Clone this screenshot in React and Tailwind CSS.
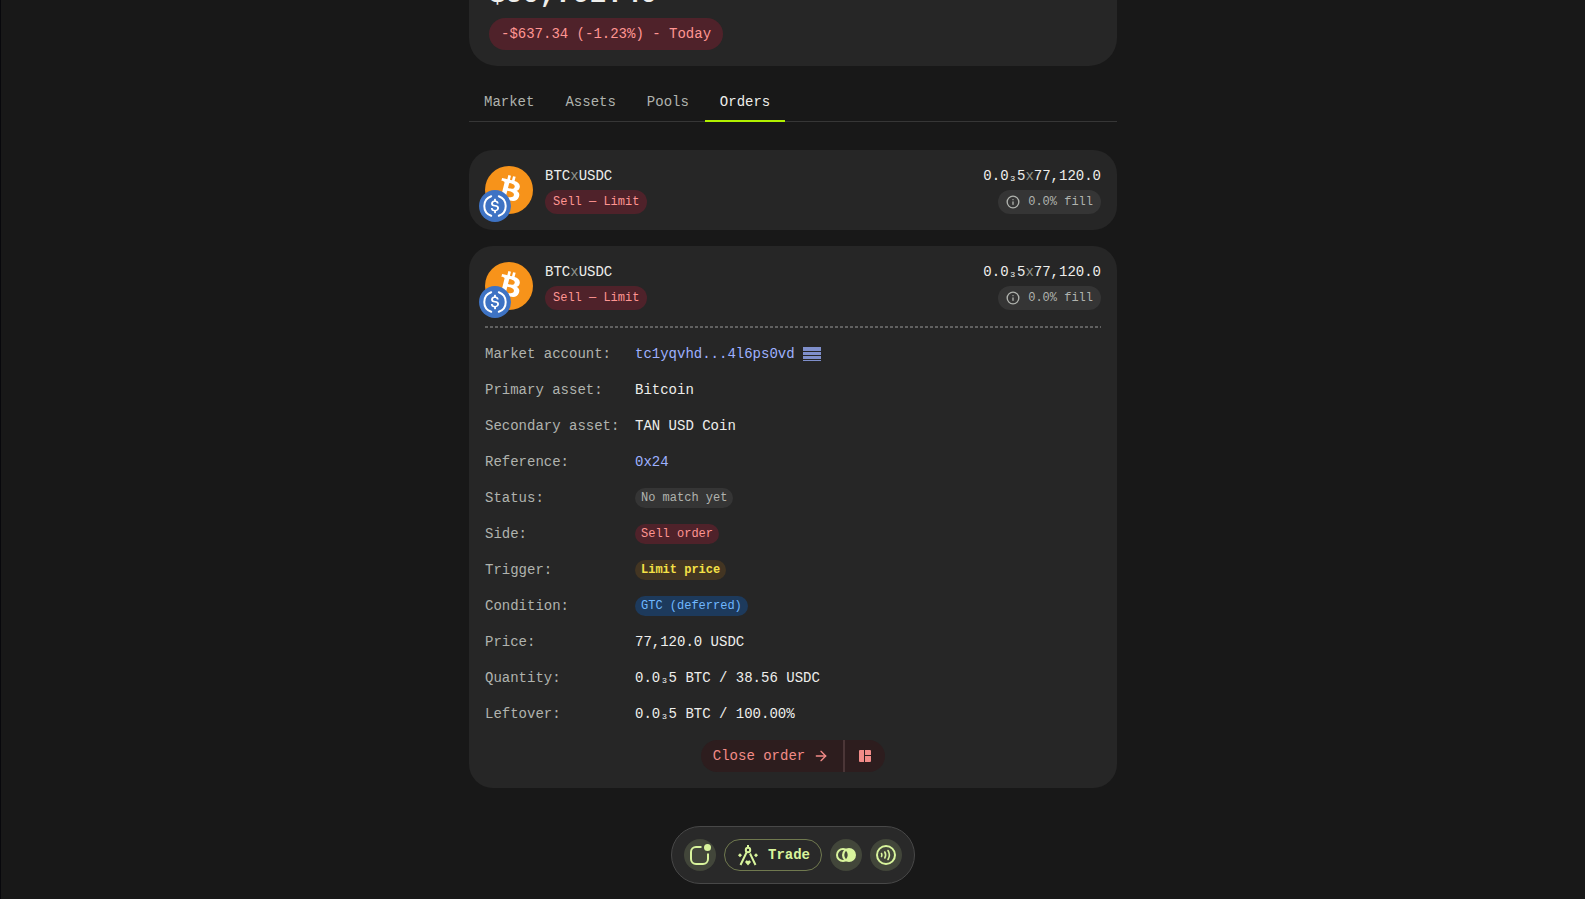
import { Info, ArrowRight } from "lucide-react";

const tabs = ["Market", "Assets", "Pools", "Orders"];

const tones = {
  gray: "bg-[#353535] text-[#b0b3ae]",
  red: "bg-[#4f222a] text-[#ff9592]",
  yellow: "bg-[#433522] text-[#f5e147] font-bold",
  blue: "bg-[#1d3a5c] text-[#70b8ff]",
};

const details = [
  { label: "Market account:", value: "tc1yqvhd...4l6ps0vd", href: "#account", lines: true },
  { label: "Primary asset:", value: "Bitcoin" },
  { label: "Secondary asset:", value: "TAN USD Coin" },
  { label: "Reference:", value: "0x24", href: "#reference" },
  { label: "Status:", value: "No match yet", tone: "gray" },
  { label: "Side:", value: "Sell order", tone: "red" },
  { label: "Trigger:", value: "Limit price", tone: "yellow" },
  { label: "Condition:", value: "GTC (deferred)", tone: "blue" },
  { label: "Price:", value: "77,120.0 USDC" },
  { label: "Quantity:", value: "0.0₃5 BTC / 38.56 USDC" },
  { label: "Leftover:", value: "0.0₃5 BTC / 100.00%" },
];

function BtcIcon() {
  return (
    <svg viewBox="0 0 32 32" className="size-12">
      <circle cx="16" cy="16" r="16" fill="#f7931a" />
      <path
        fill="#fff"
        d="M23.19 14.02c.31-2.1-1.29-3.23-3.47-3.98l.71-2.84-1.73-.43-.69 2.76c-.45-.11-.92-.22-1.39-.32l.7-2.78-1.73-.43-.71 2.83c-.37-.08-.74-.17-1.1-.26v-.01l-2.38-.6-.46 1.85s1.28.29 1.26.31c.7.17.82.64.8 1l-.8 3.24c.05.01.11.03.18.06l-.18-.05-1.13 4.53c-.09.21-.3.53-.79.41.02.02-1.26-.32-1.26-.32l-.86 1.99 2.25.56c.42.1.83.21 1.23.31l-.71 2.87 1.73.43.71-2.84c.47.13.93.25 1.38.36l-.71 2.82 1.73.43.72-2.86c2.95.56 5.17.33 6.1-2.34.75-2.15-.04-3.39-1.59-4.19 1.13-.26 1.98-1.01 2.2-2.55v.04zm-3.95 5.54c-.53 2.15-4.15.99-5.32.7l.95-3.81c1.17.29 4.93.87 4.37 3.11zm.54-5.57c-.49 1.95-3.5.96-4.47.72l.86-3.46c.97.24 4.11.7 3.61 2.74z"
      />
    </svg>
  );
}

function UsdcIcon() {
  return (
    <svg viewBox="0 0 32 32" className="absolute top-6 -left-1.5 size-8">
      <circle cx="16" cy="16" r="16" fill="#3e73c4" />
      <path
        fill="#fff"
        d="M20.02 18.12c0-2.12-1.28-2.85-3.83-3.15-1.82-.24-2.18-.73-2.18-1.58s.6-1.39 1.82-1.39c1.09 0 1.7.36 2 1.27.06.18.24.3.43.3h.97c.24 0 .42-.18.42-.42v-.06a3.04 3.04 0 0 0-2.73-2.49V9.14c0-.24-.18-.42-.49-.48h-.91c-.24 0-.42.18-.48.48v1.4c-1.82.24-2.98 1.45-2.98 2.97 0 2 1.22 2.79 3.77 3.09 1.7.3 2.25.67 2.25 1.64s-.85 1.64-2.01 1.64c-1.58 0-2.12-.67-2.31-1.58-.06-.24-.24-.36-.42-.36h-1.03c-.25 0-.43.18-.43.42v.06c.24 1.52 1.22 2.61 3.22 2.91v1.46c0 .24.18.43.49.49h.91c.24 0 .42-.19.48-.49v-1.46c1.82-.3 3.04-1.57 3.04-3.21z"
      />
      <path
        fill="none"
        stroke="#fff"
        strokeWidth="2"
        strokeLinecap="round"
        d="M12.2 6.2a10.4 10.4 0 0 0 0 19.6M19.8 6.2a10.4 10.4 0 0 1 0 19.6"
      />
    </svg>
  );
}

function OrderSummary() {
  return (
    <div className="flex justify-between">
      <div className="flex gap-3">
        <div className="relative">
          <BtcIcon />
          <UsdcIcon />
        </div>
        <div className="flex flex-col items-start gap-1">
          <span className="leading-5 text-[#eeeeec]">
            BTC<span className="text-[#8f948c]">x</span>USDC
          </span>
          <span className={`rounded-full px-2 text-xs leading-6 ${tones.red}`}>Sell — Limit</span>
        </div>
      </div>
      <div className="flex flex-col items-end gap-1">
        <span className="leading-5 text-[#eeeeec]">
          0.0₃5<span className="text-[#8f948c]">x</span>77,120.0
        </span>
        <span className={`flex items-center gap-2 rounded-full px-2 text-xs leading-6 ${tones.gray}`}>
          <Info size={14} strokeWidth={2.3} />
          0.0% fill
        </span>
      </div>
    </div>
  );
}

function DetailRow({ item }) {
  const badge = item.tone && `rounded-full px-1.5 text-xs leading-5 ${tones[item.tone]}`;

  return (
    <div className="flex h-5 items-center">
      <dt className="w-[150px] text-[#b0b3ae]">{item.label}</dt>
      <dd className="flex items-center gap-2 text-[#eeeeec]">
        {item.href ? (
          <a href={item.href} className="text-[#9eb1ff]">
            {item.value}
          </a>
        ) : (
          <span className={badge}>{item.value}</span>
        )}
        {item.lines && (
          <svg viewBox="0 0 18 14" className="h-3.5 w-[18px]" fill="#7f8fcb">
            <path d="M0 0h18v4H0zM0 5h18v3H0zM0 9h18v3H0zM0 13h18v1H0z" />
          </svg>
        )}
      </dd>
    </div>
  );
}

function RoundButton({ label, children }) {
  return (
    <button aria-label={label} className="flex size-8 items-center justify-center rounded-full bg-[#42463a]">
      {children}
    </button>
  );
}

function BottomNav() {
  return (
    <nav className="fixed inset-x-0 bottom-[15px] ml-px flex justify-center">
      <div className="flex items-center gap-2 rounded-full border border-[#484848] bg-[#292929] p-3 text-[#d8f49c]">
        <RoundButton label="Home">
          <svg viewBox="0 0 24 24" className="size-6" fill="none" stroke="currentColor" strokeWidth="2">
            <path d="M13.5 4H8a5 5 0 0 0-5 5v7a5 5 0 0 0 5 5h7a5 5 0 0 0 5-5v-5.5" />
            <circle cx="19.5" cy="4.5" r="3.5" fill="currentColor" stroke="none" />
          </svg>
        </RoundButton>
        <button className="flex h-8 items-center gap-2 rounded-full border border-[#70794f] px-[11px] font-bold">
          <svg viewBox="0 0 24 24" className="size-6" fill="none" stroke="currentColor" strokeWidth="2">
            <circle cx="12" cy="7" r="2.2" />
            <path d="M12 2v3M10.5 9.500 4.500 22M14 10.500 19.500 22" />
            <path d="m4 10.300 2 2-2 2-2-2zM20 10.300l2 2-2 2-2-2z" fill="currentColor" stroke="none" />
            <path d="M9 19 10.500 17.200l1.500.8 1.500-.8L15 19l-3 3.500z" fill="currentColor" stroke="none" />
          </svg>
          Trade
        </button>
        <RoundButton label="Swap">
          <svg viewBox="0 0 24 24" className="size-6" fill="none" stroke="currentColor" strokeWidth="2">
            <circle cx="15" cy="12" r="7" fill="currentColor" stroke="none" />
            <circle cx="9" cy="12" r="6" />
            <path d="M12 7.800a6 6 0 0 0 0 8.400 6 6 0 0 0 0-8.400z" fill="#42463a" stroke="none" />
          </svg>
        </RoundButton>
        <RoundButton label="Connect">
          <svg
            viewBox="0 0 24 24"
            className="size-6"
            fill="none"
            stroke="currentColor"
            strokeWidth="1.6"
            strokeLinecap="round"
          >
            <circle cx="12" cy="12" r="9" strokeWidth="2" />
            <path d="M7.500 10.500q.8 1.500 0 3M10.800 9q1.700 3 0 6M14 7.500q2.800 4.500 0 9" />
          </svg>
        </RoundButton>
      </div>
    </nav>
  );
}

export default function App() {
  return (
    <div className="min-h-screen overflow-hidden border-l border-[#08080c] bg-[#181818] font-['Liberation_Mono',monospace] text-sm">
      <main className="mx-auto -mt-16 max-w-[648px] pb-28">
        <section className="rounded-b-[28px] bg-[#262626] px-5 pt-10 pb-4">
          <h1 className="text-[28px] leading-[38px] font-bold text-[#eeeeec]">$50,792.40</h1>
          <p className="mt-1 w-fit rounded-full bg-[#4f222a] px-3 leading-8 text-[#ff9592]">
            -$637.34 (-1.23%) - Today
          </p>
        </section>

        <div role="tablist" className="mt-4 flex gap-px border-b border-[#363636]">
          {tabs.map((tab) => (
            <button
              key={tab}
              role="tab"
              aria-selected={tab === "Orders"}
              className={`-mb-px h-10 border-b-2 px-[15px] pt-0.5 ${
                tab === "Orders" ? "border-[#b0f000] text-[#eeeeec]" : "border-transparent text-[#b0b3ae]"
              }`}
            >
              {tab}
            </button>
          ))}
        </div>

        <section className="mt-7 rounded-3xl bg-[#262626] p-4">
          <OrderSummary />
        </section>

        <section className="mt-4 rounded-3xl bg-[#262626] p-4">
          <OrderSummary />
          <div className="mt-4 h-0.5 bg-[repeating-linear-gradient(90deg,#606060_0_3px,transparent_3px_5px)]" />
          <dl className="mt-4 flex flex-col gap-4">
            {details.map((item) => (
              <DetailRow key={item.label} item={item} />
            ))}
          </dl>
          <div className="mt-4 flex justify-center">
            <button className="flex h-8 items-center gap-2 rounded-l-full bg-[#2d1d1e] pr-3.5 pl-3 text-[#f28b88]">
              Close order
              <ArrowRight size={16} />
            </button>
            <button
              aria-label="Open layout"
              className="flex h-8 items-center rounded-r-full border-l-2 border-[#4b3637] bg-[#2d1d1e] px-3.5 text-[#f28b88]"
            >
              <svg viewBox="0 0 12 12" className="size-3" fill="currentColor">
                <path d="M1 0h4v12H1a1 1 0 0 1-1-1V1a1 1 0 0 1 1-1zM6 0h5a1 1 0 0 1 1 1v4H6zM6 6h6v5a1 1 0 0 1-1 1H6z" />
              </svg>
            </button>
          </div>
        </section>
      </main>
      <BottomNav />
    </div>
  );
}
